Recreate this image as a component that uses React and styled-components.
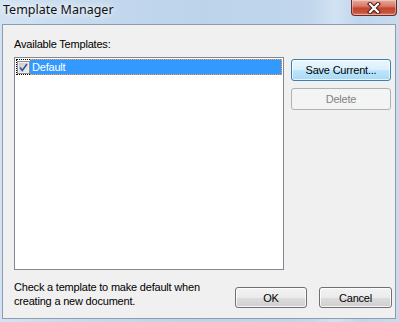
import React from "react";
import styled, { createGlobalStyle } from "styled-components";

const GlobalStyle = createGlobalStyle`
  html, body {
    margin: 0;
    padding: 0;
    overflow: hidden;
  }
  body {
    font-family: "Liberation Sans", Arial, sans-serif;
  }
`;

const App = () => {
  return (
    <>
      <GlobalStyle />
      <Window>
        <TitleBar>
          <Title>Template Manager</Title>
          <CloseButton aria-label="Close">
            <svg width="16" height="12" viewBox="0 0 16 12">
              <path
                d="M4 2 L12 10 M12 2 L4 10"
                stroke="#4a1d18"
                strokeWidth="4.2"
                strokeLinecap="square"
              />
              <path
                d="M4 2 L12 10 M12 2 L4 10"
                stroke="#ffffff"
                strokeWidth="2.2"
                strokeLinecap="square"
              />
            </svg>
          </CloseButton>
        </TitleBar>
        <Client>
          <Main>
            <Column>
              <Label>Available Templates:</Label>
              <ListBox>
                <ListRow>
                  <CheckCell>
                    <CheckBox>
                      <svg width="9" height="9" viewBox="0 0 9 9">
                        <path
                          d="M1 4.5 L3.3 7.5 L8 1"
                          fill="none"
                          stroke="#3b4f8c"
                          strokeWidth="1.6"
                        />
                      </svg>
                    </CheckBox>
                  </CheckCell>
                  <RowText>Default</RowText>
                </ListRow>
              </ListBox>
            </Column>
            <Buttons>
              <Button $focused>Save Current...</Button>
              <Button disabled>Delete</Button>
            </Buttons>
          </Main>
          <Footer>
            <Hint>
              Check a template to make default when
              <br />
              creating a new document.
            </Hint>
            <FooterButtons>
              <Button $width="72px" $height="21px">OK</Button>
              <Button $width="73px" $height="21px">Cancel</Button>
            </FooterButtons>
          </Footer>
        </Client>
      </Window>
    </>
  );
};

const Window = styled.div`
  width: 399px;
  height: 322px;
  display: flex;
  flex-direction: column;
  box-sizing: border-box;
  background: linear-gradient(
    90deg,
    #d3e3f4 0%,
    #c6daef 20%,
    #bcd3ea 50%,
    #c2d7ed 78%,
    #d2e2f3 84%,
    #c0d5ec 90%,
    #c8dbef 100%
  );
`;

const TitleBar = styled.div`
  height: 24px;
  display: flex;
  justify-content: space-between;
  align-items: flex-start;
  padding-left: 3px;
  flex-shrink: 0;
`;

const Title = styled.div`
  font-family: "Noto Sans", "Open Sans", sans-serif;
  font-size: 12.5px;
  line-height: 18px;
  margin-top: 1px;
  color: #111;
  text-shadow: 0 0 6px #fff, 0 0 10px rgba(255, 255, 255, 0.9);
`;

const CloseButton = styled.div`
  width: 46px;
  height: 16px;
  margin-right: 2px;
  box-sizing: border-box;
  border: 1px solid #6b2b22;
  border-top: none;
  border-radius: 0 0 4px 4px;
  background: linear-gradient(
    180deg,
    #e9a99b 0%,
    #d97c6a 40%,
    #c4462f 55%,
    #c9543c 85%,
    #dd8a72 100%
  );
  box-shadow: inset 0 0 0 1px rgba(255, 255, 255, 0.35);
  display: flex;
  align-items: center;
  justify-content: center;
`;

const Client = styled.div`
  flex: 1;
  margin: 0 3px 3px 2px;
  border: 1px solid #8e9cae;
  background: #f0f0f0;
  padding: 13px 3px 0 11px;
  display: flex;
  flex-direction: column;
  font-size: 11px;
  color: #000;
  letter-spacing: -0.2px;
`;

const Main = styled.div`
  display: grid;
  grid-template-columns: 270px 100px;
  column-gap: 7px;
`;

const Column = styled.div`
  display: flex;
  flex-direction: column;
`;

const Label = styled.div`
  line-height: 13px;
  margin-bottom: 6px;
`;

const ListBox = styled.div`
  height: 213px;
  box-sizing: border-box;
  border: 1px solid #828790;
  background: #fff;
  padding: 1px;
`;

const ListRow = styled.div`
  display: flex;
  height: 16px;
`;

const CheckCell = styled.div`
  width: 14px;
  box-sizing: border-box;
  border: 1px dotted #000;
  border-right: none;
  display: flex;
  align-items: center;
  justify-content: center;
  background: #fff;
`;

const CheckBox = styled.div`
  width: 13px;
  height: 13px;
  box-sizing: border-box;
  border: 1px solid #8f8f8f;
  background: linear-gradient(135deg, #bfc4ca 0%, #dfe2e6 60%, #eef0f2 100%);
  box-shadow: inset 0 0 0 1px #f0f0f0;
  display: flex;
  align-items: center;
  justify-content: center;
`;

const RowText = styled.div`
  flex: 1;
  box-sizing: border-box;
  border: 1px dotted #f5a040;
  border-left: none;
  background: #3399ff;
  color: #fff;
  line-height: 14px;
  padding-left: 2px;
`;

const Buttons = styled.div`
  display: flex;
  flex-direction: column;
  gap: 7px;
  margin-top: 21px;
`;

const Button = styled.button`
  width: ${(props) => props.$width || "100px"};
  height: ${(props) => props.$height || "22px"};
  box-sizing: border-box;
  padding: 0;
  font-family: "Liberation Sans", Arial, sans-serif;
  font-size: 11px;
  letter-spacing: -0.2px;
  color: #000;
  border-radius: 3px;
  border: 1px solid ${(props) => (props.$focused ? "#3c7fb1" : "#707070")};
  background: ${(props) =>
    props.$focused
      ? "linear-gradient(180deg, #eaf6fd 0%, #d9f0fc 50%, #bee6fd 51%, #a7d9f5 100%)"
      : "linear-gradient(180deg, #f2f2f2 0%, #ebebeb 50%, #dddddd 51%, #cfcfcf 100%)"};
  box-shadow: inset 0 0 0 1px
    ${(props) => (props.$focused ? "rgba(255,255,255,0.7)" : "rgba(255,255,255,0.8)")};

  &:disabled {
    border-color: #adb2b5;
    background: #f4f4f4;
    color: #838383;
    box-shadow: none;
  }
`;

const Footer = styled.div`
  display: flex;
  justify-content: space-between;
  align-items: flex-start;
  margin-top: 10px;
`;

const Hint = styled.div`
  line-height: 14px;
`;

const FooterButtons = styled.div`
  display: flex;
  gap: 12px;
  margin-top: 7px;
`;

export default App;
